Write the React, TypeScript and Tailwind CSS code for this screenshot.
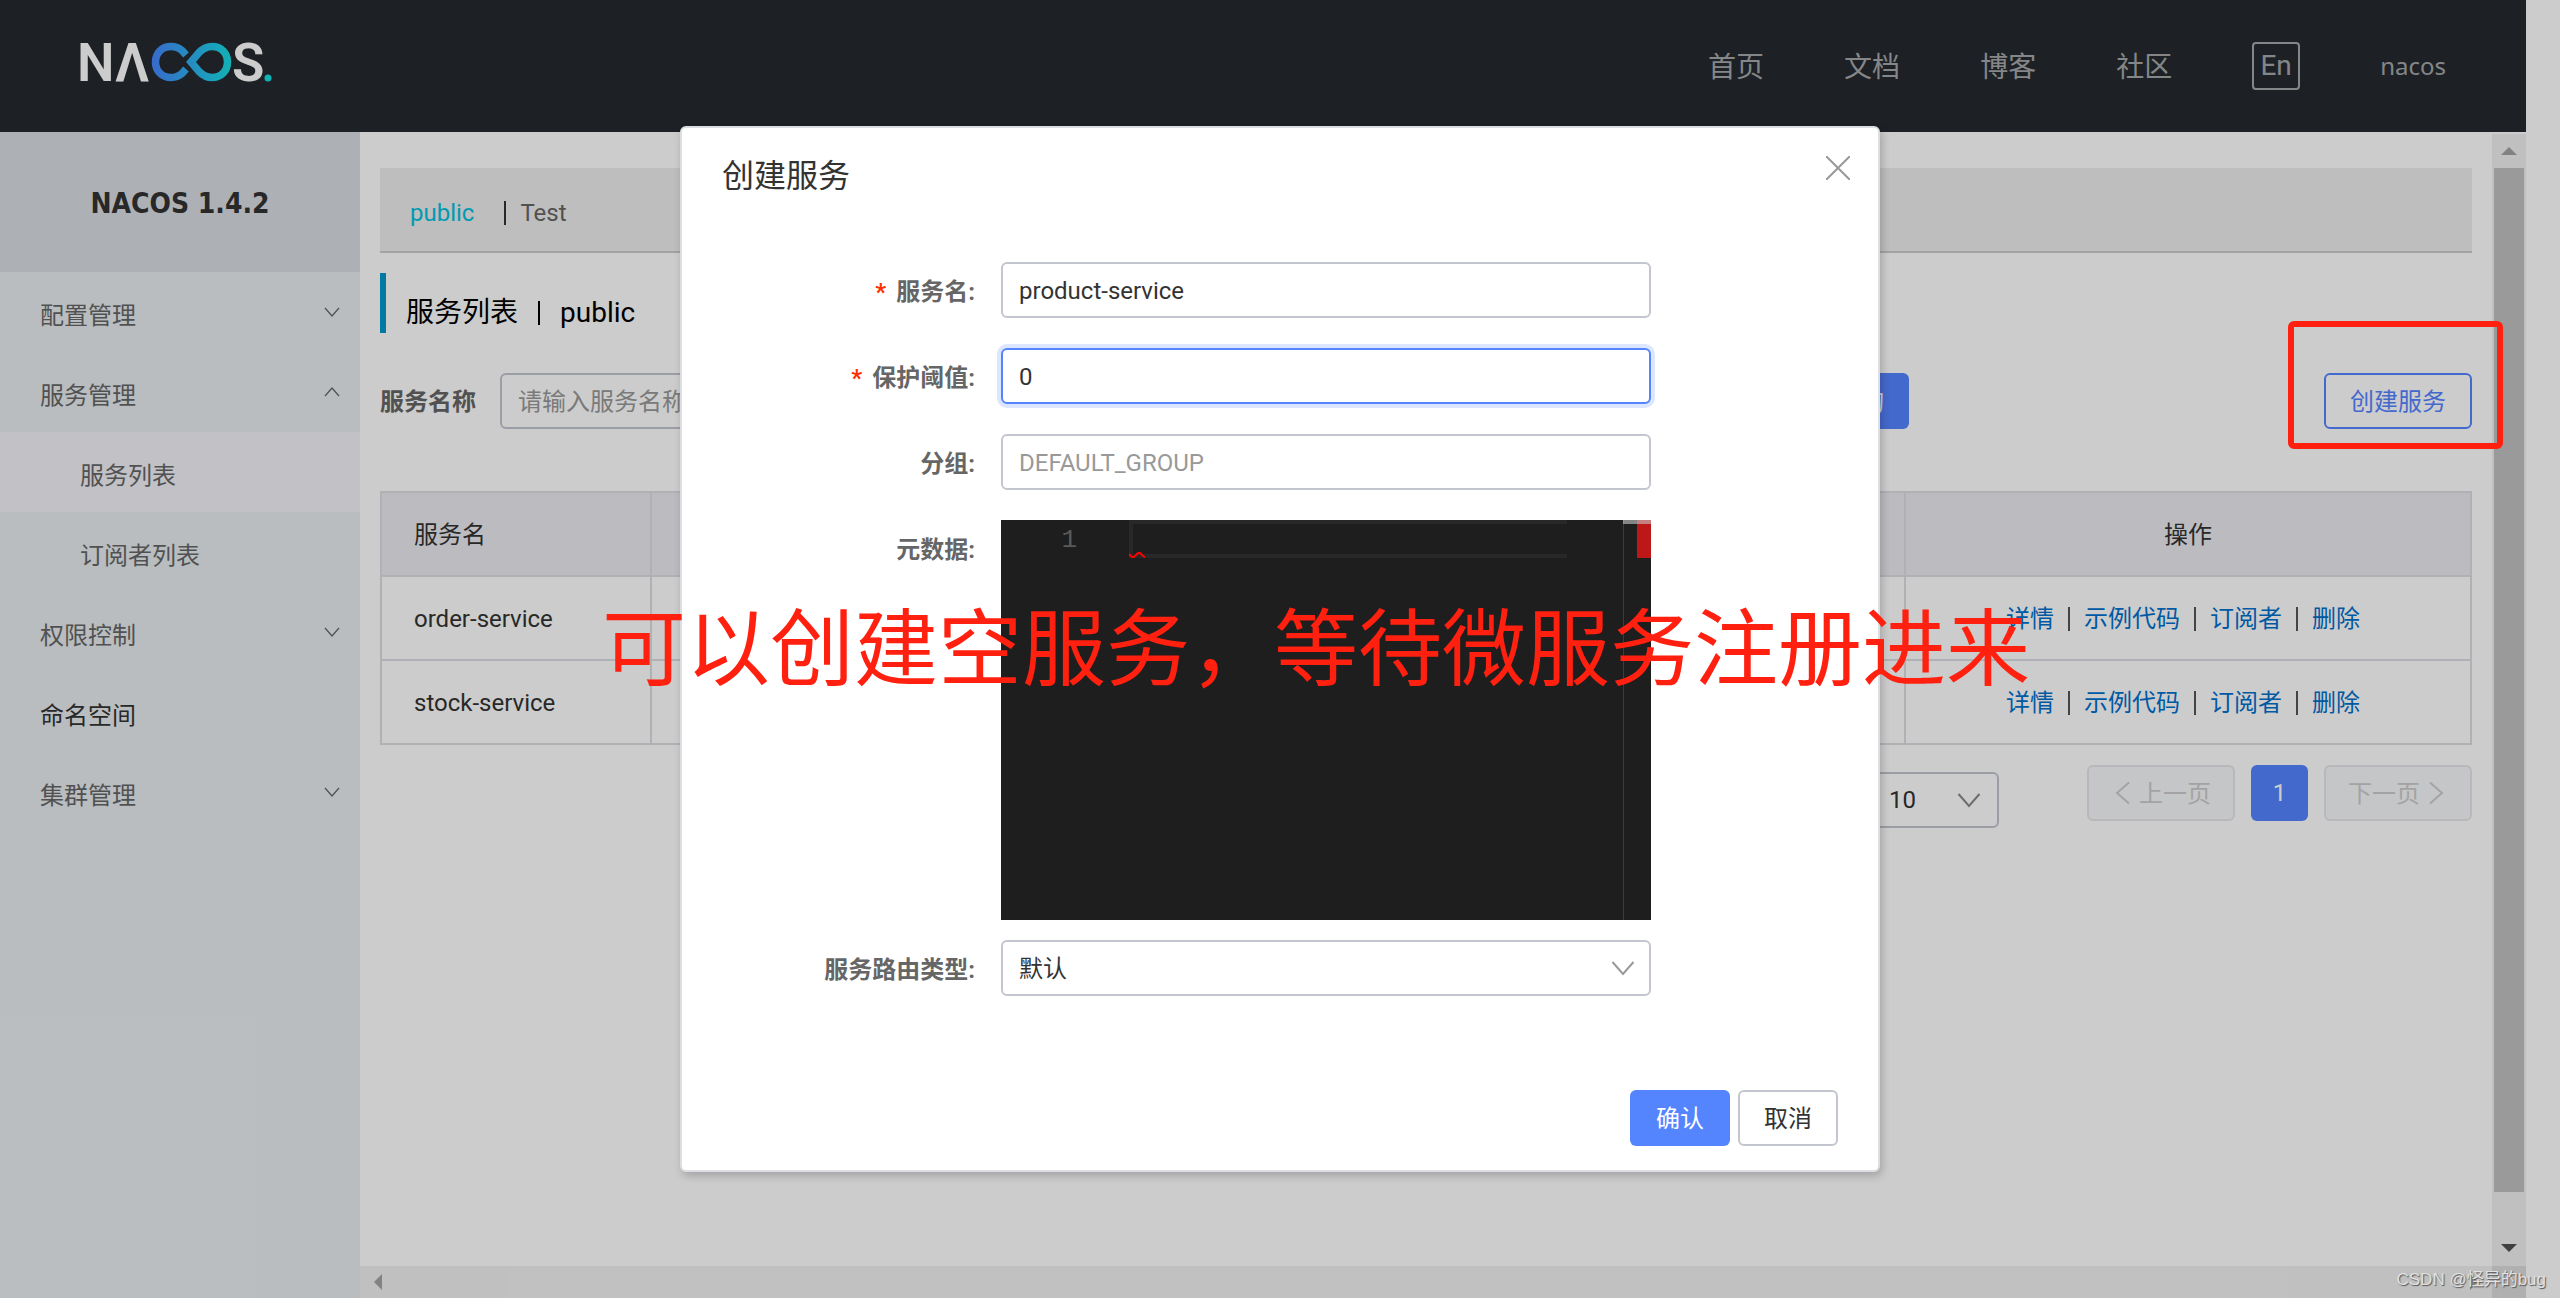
import { ReactNode } from "react";

const menus = [
	{ label: "配置管理", icon: "down" },
	{ label: "服务管理", icon: "up" },
	{ label: "服务列表", sub: true, active: true },
	{ label: "订阅者列表", sub: true },
	{ label: "权限控制", icon: "down" },
	{ label: "命名空间", dark: true },
	{ label: "集群管理", icon: "down" },
];

const services = ["order-service", "stock-service"];
const actions = ["详情", "示例代码", "订阅者", "删除"];

function Chevron({ dir = "down", className = "" }: { dir?: string; className?: string }) {
	const d: Record<string, string> = {
		down: "M1 4 L8 12 L15 4",
		up: "M1 12 L8 4 L15 12",
		left: "M12 1 L4 8 L12 15",
		right: "M4 1 L12 8 L4 15",
	};
	return (
		<svg viewBox="0 0 16 16" className={className} fill="none" stroke="currentColor" strokeWidth="1.3" aria-hidden="true">
			<path d={d[dir]} />
		</svg>
	);
}

function Logo() {
	return (
		<svg className="h-[68px] w-[208px] overflow-visible" viewBox="-8 -12 208 68" role="img" aria-label="NACOS.">
			<defs>
				<linearGradient id="loop" x1="72" x2="152" y1="0" y2="0" gradientUnits="userSpaceOnUse">
					<stop offset="0" stopColor="#4686ff" />
					<stop offset="1" stopColor="#16dfe4" />
				</linearGradient>
			</defs>
			<g fill="#fff" fontFamily="Roboto, sans-serif" fontSize="53" fontWeight="600">
				<text x="-3" y="41">N</text>
				<text x="35" y="41">Λ</text>
				<text x="152" y="41">S</text>
			</g>
			<g fill="none" stroke="url(#loop)" strokeWidth="7.5">
				<path d="M106 15 L102 10.500 C98 7 95 6.500 91 6.500 C82 6.500 75.500 13 75.500 22 C75.500 31 82 37.500 91 37.500 C95 37.500 98 37 102 33.500 L106 29" />
				<path d="M111 22 L119 12.500 C124 7.500 128 6.500 132 6.500 C141 6.500 147.500 13 147.500 22 C147.500 31 141 37.500 132 37.500 C128 37.500 124 36.500 119 31.500 Z" />
			</g>
			<circle cx="188" cy="38" r="3.500" fill="#16dfe4" />
		</svg>
	);
}

function Header() {
	return (
		<header className="flex h-[132px] items-center justify-between bg-[#252a2f] px-20 text-[28px] text-[#a6a8aa]">
			<a href="#home" className="-mt-2 -ml-2">
				<Logo />
			</a>
			<nav className="flex items-center gap-20">
				<a href="#index" className="pt-1">首页</a>
				<a href="#docs" className="pt-1">文档</a>
				<a href="#blog" className="pt-1">博客</a>
				<a href="#community" className="pt-1">社区</a>
				<button className="h-12 w-12 rounded border-2 border-[#a6a8aa] leading-10">En</button>
				<a href="#user" className="font-['Noto_Sans',sans-serif] text-2xl">nacos</a>
			</nav>
		</header>
	);
}

function Sidebar() {
	return (
		<aside className="w-[360px] shrink-0 bg-[#e8edf0] text-2xl text-[#666]">
			<h1 className="flex h-[140px] items-center justify-center bg-[#d9dee4] pt-1 font-['DejaVu_Sans_Condensed','DejaVu_Sans',sans-serif] text-[28px] font-bold text-[#333]">
				NACOS 1.4.2
			</h1>
			<ul>
				{menus.map((m) => (
					<li key={m.label}>
						<a
							href="#menu"
							className={`flex h-20 items-center justify-between pr-5 ${m.sub ? "pl-20" : "pl-10"} ${
								m.active ? "bg-[#f2f2f8]" : ""
							} ${m.dark ? "text-[#333]" : ""}`}
						>
							<span className="pt-2">{m.label}</span>
							{m.icon && <Chevron dir={m.icon} className="h-4 w-4" />}
						</a>
					</li>
				))}
			</ul>
		</aside>
	);
}

function ServiceTable() {
	return (
		<table className="mt-[62px] w-full table-fixed border-collapse text-2xl text-[#333]">
			<colgroup>
				<col className="w-[270px]" />
				<col />
				<col />
				<col />
				<col />
				<col className="w-[566px]" />
			</colgroup>
			<thead>
				<tr className="h-[84px] bg-[#ebecf0]">
					{["服务名", "分组名称", "集群数目", "实例数", "健康实例数", "操作"].map((h) => (
						<th
							key={h}
							className={`border-2 border-[#dcdee3] px-8 pt-0.5 font-normal ${h === "操作" ? "text-center" : "text-left"}`}
						>
							{h}
						</th>
					))}
				</tr>
			</thead>
			<tbody>
				{services.map((name) => (
					<tr key={name} className="h-[84px]">
						<td className="border-2 border-[#dcdee3] px-8 pt-0.5">{name}</td>
						<td className="border-2 border-[#dcdee3] px-8">DEFAULT_GROUP</td>
						<td className="border-2 border-[#dcdee3] px-8">1</td>
						<td className="border-2 border-[#dcdee3] px-8">1</td>
						<td className="border-2 border-[#dcdee3] px-8">1</td>
						<td className="border-2 border-[#dcdee3] pt-0.5 pr-8 pl-[100px]">
							<div className="flex items-center">
								{actions.map((a, i) => (
									<span key={a} className="flex items-center whitespace-nowrap">
										{i > 0 && <i className="mx-3.5 h-6 w-0.5 bg-[#555]" />}
										<a href="#action" className="text-[#0070cc]">{a}</a>
									</span>
								))}
							</div>
						</td>
					</tr>
				))}
			</tbody>
		</table>
	);
}

function Pagination() {
	return (
		<div className="mt-5 flex items-start justify-end gap-4 text-2xl">
			<label className="mt-[7px] mr-[72px] flex items-center gap-3 text-[#666]">
				每页显示
				<span className="relative text-[#333]">
					<select className="h-14 w-[132px] appearance-none rounded-md border-2 border-[#c4c6cf] pl-5">
						<option>10</option>
					</select>
					<Chevron className="pointer-events-none absolute top-4 right-[18px] h-6 w-6 text-[#888]" />
				</span>
			</label>
			<button disabled className="flex h-14 w-[148px] items-center justify-center gap-1 rounded-md border-2 border-[#e6e7eb] bg-[#f7f8fa] text-[#ccc]">
				<Chevron dir="left" className="h-6 w-6" />
				<span className="pt-0.5">上一页</span>
			</button>
			<button className="h-14 w-[57px] rounded-md bg-[#5584ff] text-white">1</button>
			<button disabled className="flex h-14 w-[148px] items-center justify-center gap-1 rounded-md border-2 border-[#e6e7eb] bg-[#f7f8fa] text-[#ccc]">
				<span className="pt-0.5">下一页</span>
				<Chevron dir="right" className="h-6 w-6" />
			</button>
		</div>
	);
}

function ServiceList() {
	return (
		<div className="min-w-0 flex-1 px-5 pt-9">
			<div className="flex h-[85px] items-center border-b-2 border-[#ccc] bg-[#eee] px-[30px] pt-1.5 text-2xl text-[#666]">
				<a href="#public" className="text-[#00c1de]">public</a>
				<i className="mr-3.5 ml-[30px] h-6 w-0.5 bg-[#333]" />
				<a href="#test">Test</a>
			</div>
			<h2 className="mt-5 flex h-[60px] items-center gap-5 border-l-[6px] border-[#09c] pt-5 pl-5 text-[28px] text-black">
				服务列表
				<i className="h-6 w-0.5 bg-black" />
				public
			</h2>
			<div className="mt-10 flex items-center text-2xl">
				<label htmlFor="keyword" className="mr-6 pt-0.5 font-bold text-[#666]">服务名称</label>
				<input
					id="keyword"
					placeholder="请输入服务名称"
					className="h-14 w-[400px] rounded-md border-2 border-[#c4c6cf] px-4 pt-0.5 placeholder:text-[#999]"
				/>
				<div className="flex flex-1 justify-between pl-[911px]">
					<button className="h-14 w-[98px] rounded-md bg-[#5584ff] pt-0.5 text-white">查询</button>
					<button className="h-14 w-[148px] rounded-md border-2 border-[#5584ff] pt-0.5 text-[#5584ff]">创建服务</button>
				</div>
			</div>
			<ServiceTable />
			<Pagination />
		</div>
	);
}

function Triangle({ className, points }: { className: string; points: string }) {
	return (
		<svg viewBox="0 0 16 16" className={`h-4 w-4 ${className}`} fill="currentColor" aria-hidden="true">
			<polygon points={points} />
		</svg>
	);
}

function Row({ id, label, required, children }: { id: string; label: string; required?: boolean; children: ReactNode }) {
	return (
		<div className="flex">
			<label htmlFor={id} className="h-14 w-[279px] shrink-0 pt-0.5 pr-[26px] text-right leading-14 font-bold text-[#666]">
				{required && <span className="mr-2.5 text-[#ff3000]">*</span>}
				{label}:
			</label>
			<div className="relative w-[650px]">{children}</div>
		</div>
	);
}

function Editor() {
	return (
		<div className="relative flex h-[400px] bg-[#1e1e1e]">
			<span className="w-[76px] pt-0.5 text-right font-['Liberation_Mono',monospace] text-[26px] leading-9 text-[#5a5a5a]">1</span>
			<textarea
				id="metadata"
				className="ml-[52px] h-[38px] w-[438px] resize-none border-4 border-r-0 border-[#282828] text-[#d4d4d4]"
			/>
			<svg className="absolute top-8 left-32 h-1.5 w-4" viewBox="0 0 16 6" fill="none" stroke="#f00" strokeWidth="2">
				<path d="M0 2 L3 5 L5 5 L9 1 L11 1 L16 5.500" />
			</svg>
			<div className="ml-auto w-7 border-l border-[#3c3c3c]">
				<div className="ml-auto h-[38px] w-3.5 bg-[#bd1717]" />
			</div>
			<div className="absolute top-0 right-0 h-1 w-7 bg-[#c8c8c8]/60" />
		</div>
	);
}

function CreateDialog() {
	const field = "h-14 w-full rounded-md border-2 border-[#c4c6cf] bg-white px-4 pt-0.5 text-[#333] placeholder:text-[#999]";
	return (
		<form
			role="dialog"
			aria-label="创建服务"
			className="relative w-[1200px] rounded-md border-2 border-[#dcdee3] bg-white px-10 text-2xl shadow-[2px_4px_8px_rgba(0,0,0,0.2)]"
		>
			<h3 className="pt-6 text-[32px] leading-12 text-[#333]">创建服务</h3>
			<button type="button" aria-label="关闭" className="absolute top-7 right-7 text-[#999]">
				<svg className="h-6 w-6" viewBox="0 0 24 24" fill="none" stroke="currentColor" strokeWidth="2">
					<path d="M0 0 L24 24 M24 0 L0 24" />
				</svg>
			</button>
			<div className="flex flex-col pt-[62px]">
				<div className="flex flex-col gap-[30px]">
					<Row id="name" label="服务名" required>
						<input id="name" defaultValue="product-service" className={field} />
					</Row>
					<Row id="threshold" label="保护阈值" required>
						<input
							id="threshold"
							defaultValue="0"
							className="h-14 w-full rounded-md border-2 border-[#5584ff] bg-white px-4 pt-0.5 text-[#333] shadow-[0_0_0_4px_rgba(85,132,255,0.2)]"
						/>
					</Row>
					<Row id="group" label="分组">
						<input id="group" placeholder="DEFAULT_GROUP" className={field} />
					</Row>
					<Row id="metadata" label="元数据">
						<Editor />
					</Row>
				</div>
				<div className="mt-5">
					<Row id="route" label="服务路由类型">
						<select id="route" className={`${field} appearance-none`}>
							<option>默认</option>
						</select>
						<Chevron className="pointer-events-none absolute top-4 right-4 h-6 w-6 text-[#999]" />
					</Row>
				</div>
			</div>
			<div className="mt-[94px] flex justify-end gap-2 pb-6">
				<button type="button" className="h-14 w-[100px] rounded-md bg-[#5584ff] pt-0.5 text-white">确认</button>
				<button type="button" className="h-14 w-[100px] rounded-md border-2 border-[#c4c6cf] pt-0.5 text-[#333]">取消</button>
			</div>
		</form>
	);
}

export default function App() {
	return (
		<div className="relative flex h-screen flex-col overflow-hidden bg-white pr-[34px] font-['Roboto','Noto_Sans_CJK_SC',sans-serif]">
			<Header />
			<div className="flex min-h-0 flex-1">
				<Sidebar />
				<main className="flex min-w-0 flex-1 flex-col">
					<div className="flex min-h-0 flex-1">
						<ServiceList />
						<div className="mt-0.5 flex w-[34px] flex-col items-center bg-[#f1f1f1]">
							<div className="flex h-[34px] items-center">
								<Triangle className="text-[#a3a3a3]" points="0,12 8,4 16,12" />
							</div>
							<div className="w-[30px] flex-1 bg-[#c1c1c1]" />
							<div className="flex h-[74px] items-end pb-2.5">
								<Triangle className="text-[#505050]" points="0,4 16,4 8,12" />
							</div>
						</div>
					</div>
					<div className="flex h-8 items-center bg-[#f1f1f1]">
						<Triangle className="ml-2.5 text-[#a3a3a3]" points="12,0 12,16 4,8" />
						<Triangle className="mr-2.5 ml-auto text-[#a3a3a3]" points="4,0 4,16 12,8" />
						<div className="h-full w-[34px] bg-[#dcdcdc]" />
					</div>
				</main>
			</div>

			<div className="absolute inset-0 flex items-start justify-center bg-black/20 pt-[126px]">
				<CreateDialog />
			</div>

			{/* annotations */}
			<div className="absolute top-[321px] right-[57px] h-32 w-[215px] rounded-md border-[6px] border-[#ff2010]" />
			<p className="absolute top-[591px] left-[602px] text-[84px] leading-[120px] whitespace-nowrap text-[#ff2010]">
				可以创建空服务，等待微服务注册进来
			</p>
			<p className="absolute right-3.5 bottom-1 font-['Liberation_Sans','Noto_Sans_CJK_SC',sans-serif] text-[17px] leading-7 text-[#e0e0e0] [text-shadow:1px_1px_1px_#555]">
				CSDN @怪异的bug
			</p>
		</div>
	);
}
